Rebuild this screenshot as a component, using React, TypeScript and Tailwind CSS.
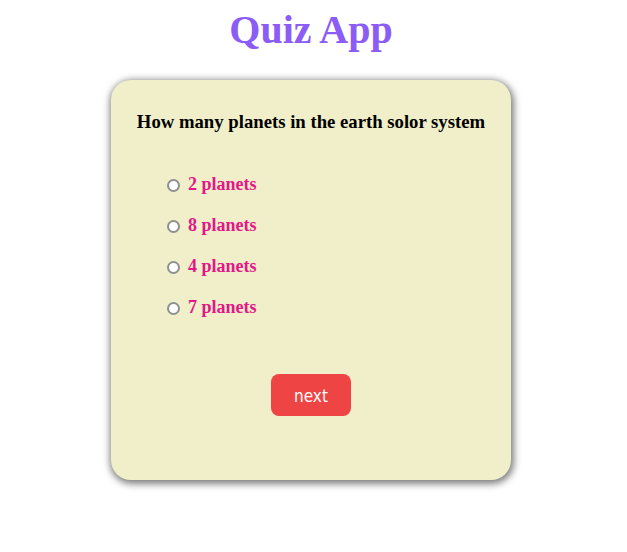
const options = ["2 planets", "8 planets", "4 planets", "7 planets"];

export default function App() {
  return (
    <div className="flex min-h-[552px] flex-col items-center bg-white pr-[5px] font-['Liberation_Serif',serif]">
      <h1 className="pt-[7px] text-[40px] font-bold leading-[46px] text-[#8b5cf6]">Quiz App</h1>

      <div className="mt-[27px] flex h-[400px] w-[400px] flex-col rounded-[20px] bg-[#f0efc9] pt-[31px] shadow-[1px_2px_7px_2px_rgba(0,0,0,0.5)]">
        <h3 className="text-center text-[18.72px] font-bold leading-[22px] text-black">
          How many planets in the earth solor system
        </h3>

        <div className="mt-[40px] flex flex-col gap-[19px] pl-[56px]">
          {options.map((opt) => (
            <label key={opt} className="flex items-center gap-2">
              <input
                type="radio"
                name="answer"
                className="mt-[3px] h-[13px] w-[13px] appearance-none rounded-full border-2 border-[#8f8f8f] bg-white"
              />
              <span className="text-[18px] font-bold leading-[22px] text-[#e3168a]">{opt}</span>
            </label>
          ))}
        </div>

        <div className="mt-[56px] flex justify-center">
          <button
            type="button"
            className="h-[42px] w-[80px] rounded-lg bg-[#ef4444] pt-[3px] font-['DejaVu_Sans_Condensed','DejaVu_Sans',sans-serif] text-[17px] text-white"
          >
            next
          </button>
        </div>
      </div>
    </div>
  );
}
